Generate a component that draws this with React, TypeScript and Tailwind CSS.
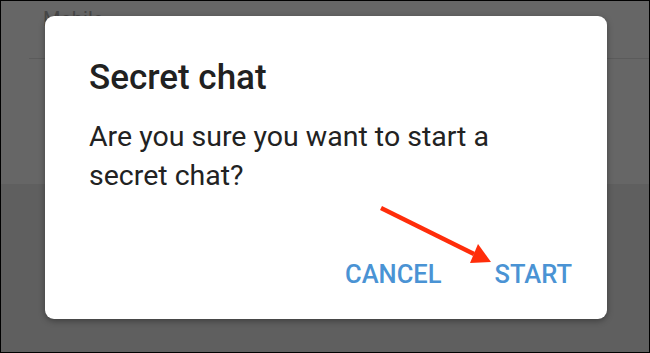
const SecretChatDialog = () => {
    return (
        <div className="absolute left-[44px] top-[15px] w-[562px] h-[303px] bg-white rounded-[9px] shadow-[0_2px_6px_rgba(0,0,0,0.35)] flex flex-col px-[45px] pt-[41px]">
            {/* Title */}
            <p className="text-[35px] leading-[41px] font-medium text-[#212121] -ml-[1px]">Secret chat</p>

            {/* Message */}
            <p className="mt-[19px] text-[28.5px] leading-[39px] text-[#222222] -ml-[1px]">
                Are you sure you want to start a secret chat?
            </p>

            {/* Actions */}
            <div className="mt-auto mb-[31px] flex justify-end items-center gap-[53px] -mr-[10px]">
                <button className="text-[25.5px] leading-[28px] font-medium text-[#4a93d4]">CANCEL</button>
                <button className="text-[25.5px] leading-[28px] font-medium text-[#4a93d4]">START</button>
            </div>
        </div>
    )
}

const App = () => {
    return (
        <div
            className="relative w-[650px] h-[353px] overflow-hidden border border-black bg-[#5f5f5f]"
            style={{ fontFamily: "Roboto, 'Noto Sans', sans-serif" }}
        >
            {/* Dimmed page behind the dialog */}
            <div className="flex flex-col">
                <div className="h-[58px] bg-[#666666] flex flex-col">
                    <p className="pl-[42px] pt-[6px] text-[20px] leading-[24px] text-[#474747]">Mobile</p>
                    <div className="mt-auto ml-[28px] h-[1px] bg-[#5b5b5b]" />
                </div>
                <div className="h-[125px] bg-[#666666]" />
            </div>

            <SecretChatDialog />

            {/* Red annotation arrow */}
            <svg className="absolute left-0 top-0 pointer-events-none" width="650" height="353" viewBox="0 0 650 353">
                <line x1="380" y1="207" x2="473" y2="253" stroke="#ff2d0a" strokeWidth="4.5" />
                <polygon points="477,243 469,262 490,261" fill="#ff2d0a" />
            </svg>
        </div>
    )
}

export default App
